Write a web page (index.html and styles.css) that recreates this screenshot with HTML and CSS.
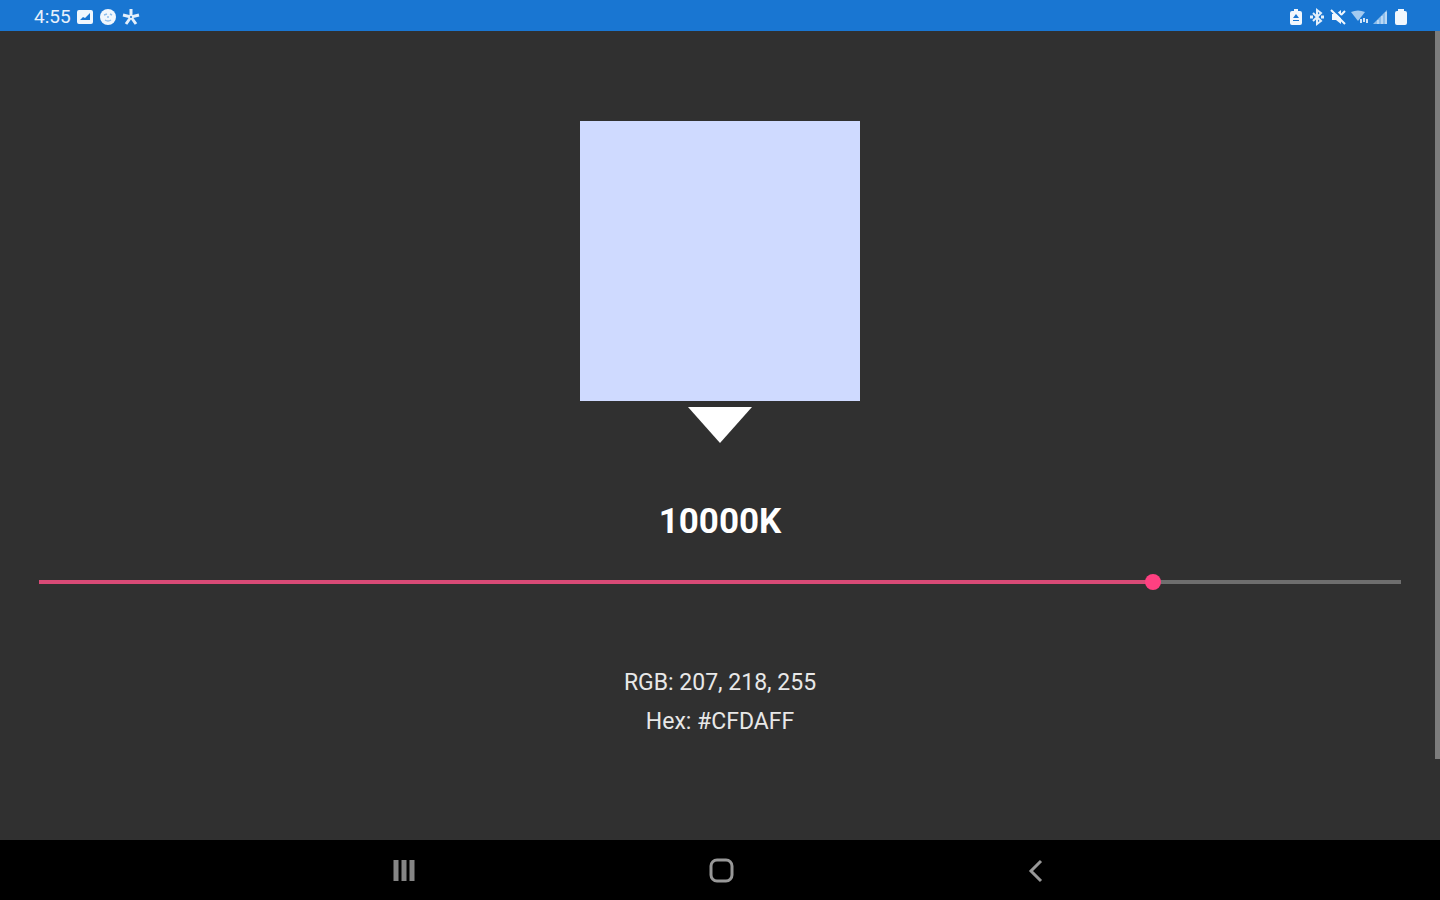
FILE: index.html
```html
<!DOCTYPE html>
<html lang="en">
<head>
    <meta charset="UTF-8">
    <meta name="viewport" content="width=device-width, initial-scale=1.0">
    <title>Color Temperature</title>
    <link rel="stylesheet" href="styles.css">
</head>
<body>

    <header class="status-bar">
        <div class="status-group">
            <span class="clock">4:55</span>
            <svg class="status-icon" viewBox="0 0 18 18">
                <path fill-rule="evenodd" d="M3 2h12q2 0 2 2v10q0 2-2 2H3q-2 0-2-2V4q0-2 2-2zM4 12l3-3 2 1 5-5v7z" fill="#f1f7fd"/>
            </svg>
            <svg class="status-icon" viewBox="0 0 18 18">
                <circle cx="9" cy="9" r="8" fill="#f1f7fd"/>
                <path d="M5 7l3-1M11 6l2 1M6 12q3 2 6 0M9 8v2" stroke="#8fbfec" stroke-width="1.5" fill="none"/>
            </svg>
            <svg class="status-icon" viewBox="0 0 18 18">
                <path d="M9 9V1M9 9L1 7M9 9l8-2M9 9l-5 7M9 9l5 7" stroke="#e3effb" stroke-width="3" fill="none"/>
                <circle cx="9" cy="9" r="1" fill="#1976d2"/>
            </svg>
        </div>
        <div class="status-group status-right">
            <svg class="status-icon" viewBox="0 0 18 18">
                <path fill-rule="evenodd" d="M7 1h4v2h2q2 0 2 2v10q0 2-2 2H5q-2 0-2-2V5q0-2 2-2h2zM9 6l-3 4h6zM6 12v1h6v-1z" fill="#f1f7fd"/>
            </svg>
            <svg class="status-icon" viewBox="0 0 18 18">
                <path d="M5 5l8 8-4 3V2l4 3-8 8" stroke="#e3effb" stroke-width="2" fill="none"/>
                <path d="M2 9h3M13 9h3" stroke="#e3effb" stroke-width="3"/>
            </svg>
            <svg class="status-icon" viewBox="0 0 18 18">
                <path d="M3 6h4l5-4v14l-5-4H3z" fill="#f1f7fd"/>
                <path d="M4 1l13 13" stroke="#1976d2" stroke-width="2"/>
                <path d="M2 2l14 14M12 7l4-4" stroke="#f1f7fd" stroke-width="2"/>
            </svg>
            <svg class="status-icon" viewBox="0 0 18 18">
                <path d="M1 4q7-3 14 0l-7 9z" fill="#a3caf0"/>
                <path d="M11 15v-4M14 10v4M17 15v-4" stroke="#d1e4f7" stroke-width="2"/>
            </svg>
            <svg class="status-icon" viewBox="0 0 18 18">
                <path d="M2 16L16 2v14z" fill="#8cbdeb"/>
                <path d="M7 16v-4M11 16V8M15 16V4" stroke="#b9d7f4" stroke-width="2"/>
            </svg>
            <svg class="status-icon" viewBox="0 0 18 18">
                <path d="M6 1h6v2h1q2 0 2 2v10q0 2-2 2H5q-2 0-2-2V5q0-2 2-2h1z" fill="#f1f7fd"/>
            </svg>
        </div>
    </header>

    <main class="content">
        <div class="swatch"></div>
        <svg class="pointer" viewBox="0 0 64 36">
            <path d="M0 0h64L32 36z" fill="#fff"/>
        </svg>
        <h1 class="temperature" id="temperature">10000K</h1>
        <input type="range" class="slider" id="slider" min="1000" max="12000" step="100" value="10000" aria-labelledby="temperature" style="--fill: 81.8%">
        <div class="values">
            <p>RGB: 207, 218, 255</p>
            <p>Hex: #CFDAFF</p>
        </div>
        <div class="scrollbar"></div>
    </main>

    <nav class="nav-bar">
        <button aria-label="Recent apps">
            <svg viewBox="0 0 28 28">
                <path d="M5 3v21M13 3v21M21 3v21" stroke="#858585" stroke-width="5"/>
            </svg>
        </button>
        <button aria-label="Home">
            <svg viewBox="0 0 28 28">
                <rect x="4" y="3" width="21" height="21" rx="6" stroke="#989898" stroke-width="3" fill="none"/>
            </svg>
        </button>
        <button aria-label="Back">
            <svg viewBox="0 0 28 28">
                <path d="M18 4L8 14l10 10" stroke="#989898" stroke-width="3" fill="none"/>
            </svg>
        </button>
    </nav>

    <script>
        var slider = document.getElementById("slider");

        slider.addEventListener("input", function() {
            var fill = (slider.value - slider.min) / (slider.max - slider.min) * 100;
            slider.style.setProperty("--fill", fill + "%");
            document.getElementById("temperature").textContent = slider.value + "K";
        });
    </script>

</body>
</html>
```
FILE: styles.css
```css
* {
    box-sizing: border-box;
}
body {
    display: flex;
    flex-direction: column;
    min-height: 100vh;
    margin: 0;
    background-color: #303030;
    color: #fff;
    font-family: Roboto, sans-serif;
}
.status-bar {
    display: flex;
    justify-content: space-between;
    align-items: center;
    height: 31px;
    padding: 2px 30px 0 34px;
    background-color: #1976d2;
}
.status-group {
    display: flex;
    align-items: center;
    gap: 5px;
}
.status-right {
    gap: 3px;
}
.clock {
    font-size: 19px;
    line-height: 24px;
    color: #e8f1fb;
}
.status-icon {
    display: block;
    width: 18px;
    height: 18px;
}
.content {
    position: relative;
    flex: 1;
    display: flex;
    flex-direction: column;
    align-items: center;
    padding: 90px 31px 0;
}
.swatch {
    width: 280px;
    height: 280px;
    background-color: #cfdaff;
}
.pointer {
    display: block;
    width: 64px;
    height: 36px;
    margin-top: 6px;
}
.temperature {
    margin: 57px 0 0;
    font-size: 35px;
    line-height: 44px;
    font-weight: bold;
}
.slider {
    appearance: none;
    width: 100%;
    height: 16px;
    margin: 30px 0 0;
    padding: 0;
    background: linear-gradient(to right, #d84a76 var(--fill), #6e6e6e var(--fill)) center / calc(100% - 16px) 4px no-repeat;
    cursor: pointer;
}
.slider::-webkit-slider-thumb {
    appearance: none;
    width: 16px;
    height: 16px;
    border-radius: 50%;
    background-color: #ff4081;
}
.slider::-moz-range-thumb {
    width: 16px;
    height: 16px;
    border: none;
    border-radius: 50%;
    background-color: #ff4081;
}
.values {
    margin-top: 73px;
    text-align: center;
    font-size: 23px;
    line-height: 39px;
    color: #e8e8e8;
}
.values p {
    margin: 0;
}
.scrollbar {
    position: absolute;
    top: 0;
    right: 0;
    width: 5px;
    height: 90%;
    background-color: #7c7c7c;
}
.nav-bar {
    display: flex;
    justify-content: center;
    align-items: center;
    gap: 20vw;
    height: 60px;
    padding: 2px 0 0 2px;
    background-color: #000;
}
.nav-bar button {
    width: 28px;
    height: 28px;
    padding: 0;
    border: none;
    background: none;
    cursor: pointer;
}
.nav-bar svg {
    display: block;
    width: 28px;
    height: 28px;
}
```
